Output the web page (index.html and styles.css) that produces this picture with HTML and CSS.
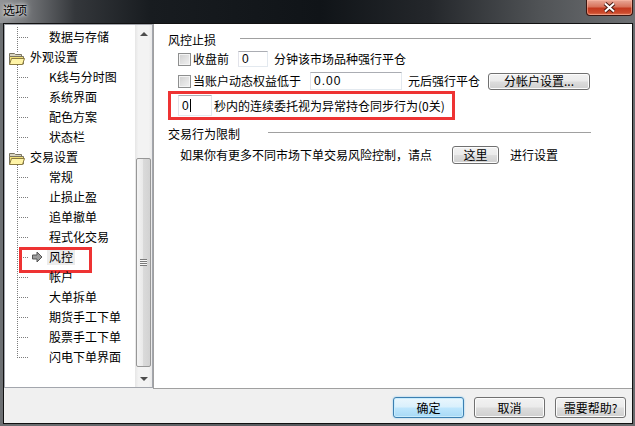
FILE: index.html
```html
<!DOCTYPE html>
<html lang="zh-CN">
<head>
    <meta charset="UTF-8">
    <title>选项</title>
    <link rel="stylesheet" href="styles.css">
</head>
<body>
<div class="window">

    <!-- TITLE BAR -->
    <div class="titlebar">
        <span class="title">选项</span>
        <button class="close-btn">
            <svg width="13" height="11" viewBox="0 0 13 11">
                <path d="M2 1.5 L11 9.5 M11 1.5 L2 9.5" stroke="#4a1a12" stroke-width="4"/>
                <path d="M2 1.5 L11 9.5 M11 1.5 L2 9.5" stroke="#fff" stroke-width="2"/>
            </svg>
        </button>
    </div>

    <div class="client">
        <div class="main">

            <!-- TREE -->
            <div class="tree">
                <ul class="tree-list">
                    <li class="node leaf"><span class="label">数据与存储</span></li>
                    <li class="node root">
                        <svg class="folder" width="16" height="13" viewBox="0 0 16 13">
                            <path d="M0.5 1.5 h5 l1 1 h6 v2 h-12z" fill="#d9d4c0" stroke="#7a7560"/>
                            <path d="M0.5 4.5 h14 v7.5 h-14z" fill="#f4e27a" stroke="#7a7560"/>
                            <path d="M2.5 6.5 h13 l-2 6 h-13z" fill="#fff4a6" stroke="#8a7a40"/>
                        </svg>
                        <span class="label">外观设置</span>
                    </li>
                    <li class="node leaf"><span class="label">K线与分时图</span></li>
                    <li class="node leaf"><span class="label">系统界面</span></li>
                    <li class="node leaf"><span class="label">配色方案</span></li>
                    <li class="node leaf"><span class="label">状态栏</span></li>
                    <li class="node root">
                        <svg class="folder" width="16" height="13" viewBox="0 0 16 13">
                            <path d="M0.5 1.5 h5 l1 1 h6 v2 h-12z" fill="#d9d4c0" stroke="#7a7560"/>
                            <path d="M0.5 4.5 h14 v7.5 h-14z" fill="#f4e27a" stroke="#7a7560"/>
                            <path d="M2.5 6.5 h13 l-2 6 h-13z" fill="#fff4a6" stroke="#8a7a40"/>
                        </svg>
                        <span class="label">交易设置</span>
                    </li>
                    <li class="node leaf"><span class="label">常规</span></li>
                    <li class="node leaf"><span class="label">止损止盈</span></li>
                    <li class="node leaf"><span class="label">追单撤单</span></li>
                    <li class="node leaf"><span class="label">程式化交易</span></li>
                    <li class="node leaf selected">
                        <svg class="arrow" width="12" height="12" viewBox="0 0 12 12">
                            <polygon points="1.5,4 6,4 6,1 11,6 6,11 6,8 1.5,8" fill="#9c9c9c" stroke="#555"/>
                        </svg>
                        <span class="label">风控</span>
                        <span class="mark"></span>
                    </li>
                    <li class="node leaf"><span class="label">帐户</span></li>
                    <li class="node leaf"><span class="label">大单拆单</span></li>
                    <li class="node leaf"><span class="label">期货手工下单</span></li>
                    <li class="node leaf"><span class="label">股票手工下单</span></li>
                    <li class="node leaf last"><span class="label">闪电下单界面</span></li>
                </ul>
                <div class="scrollbar">
                    <div class="sb-btn up"></div>
                    <div class="sb-track">
                        <div class="sb-thumb"><span class="grip"></span></div>
                    </div>
                    <div class="sb-btn down"></div>
                </div>
            </div>

            <!-- SETTINGS PANEL -->
            <div class="panel">
                <div class="group-title">
                    <span>风控止损</span>
                    <span class="rule"></span>
                </div>
                <div class="opt-row row-close">
                    <span class="check"></span>
                    <span class="txt">收盘前</span>
                    <span class="field field-min">0</span>
                    <span class="txt gap">分钟该市场品种强行平仓</span>
                </div>
                <div class="opt-row row-equity">
                    <span class="check"></span>
                    <span class="txt">当账户动态权益低于</span>
                    <span class="field field-money">0.00</span>
                    <span class="txt gap">元后强行平仓</span>
                    <button class="btn btn-account">分帐户设置...</button>
                </div>
                <div class="alert-box">
                    <span class="field field-sec">0<i class="caret"></i></span>
                    <span class="txt">秒内的连续委托视为异常持仓同步行为(0关)</span>
                </div>

                <div class="group-title group-second">
                    <span>交易行为限制</span>
                    <span class="rule"></span>
                </div>
                <div class="opt-row row-more">
                    <span class="txt">如果你有更多不同市场下单交易风险控制，请点</span>
                    <button class="btn btn-here">这里</button>
                    <span class="txt">进行设置</span>
                </div>
            </div>
        </div>

        <!-- FOOTER BUTTONS -->
        <div class="footer">
            <button class="btn btn-dialog btn-default">确定</button>
            <button class="btn btn-dialog">取消</button>
            <button class="btn btn-dialog">需要帮助?</button>
        </div>
    </div>
</div>
</body>
</html>
```

FILE: styles.css
```css
body {
    margin: 0;
    font-family: "Noto Sans CJK SC", "Liberation Sans", sans-serif;
    font-size: 12px;
    color: #000;
}

/* WINDOW */
.window {
    width: 635px;
    height: 426px;
    overflow: hidden;
    display: flex;
    flex-direction: column;
    background: linear-gradient(to right, #6c6f72, #55585c 50%, #696b6e);
}

/* TITLE BAR */
.titlebar {
    height: 23px;
    flex: none;
    display: flex;
    justify-content: space-between;
    align-items: flex-start;
    background: linear-gradient(to right, #929497 0, #7a7c7f 22px, #34373b 75px, #181c20 150px, #101418 320px, #24272b 430px, #505356 540px, #6e7073 635px);
}

.title {
    padding: 2px 0 0 3px;
    line-height: 16px;
    text-shadow: 0 0 6px #fff, 0 0 3px rgba(255,255,255,0.8);
}

.close-btn {
    width: 47px;
    height: 16px;
    margin-right: 2px;
    padding: 0;
    border: 1px solid #3b1610;
    border-top: none;
    border-radius: 0 0 4px 4px;
    background: linear-gradient(#e9a898 0%, #d8735c 45%, #c3391f 55%, #cc4a2c 85%, #e07a58 100%);
    box-shadow: inset 0 0 0 1px rgba(255,190,170,0.5);
    display: flex;
    align-items: center;
    justify-content: center;
}

/* CLIENT AREA */
.client {
    flex: none;
    height: 399px;
    margin: 0 2px 2px 3px;
    border: 1px solid #111;
    background: #f0f0f0;
    display: flex;
    flex-direction: column;
}

.main {
    height: 365px;
    display: flex;
    align-items: flex-start;
}

/* TREE */
.tree {
    width: 147px;
    height: 362px;
    border: 1px solid #a3a6ad;
    background: #fff;
    display: flex;
}

.tree-list {
    flex: 1;
    list-style: none;
    margin: 0;
    padding: 2px 0 0 0;
}

.node {
    position: relative;
    height: 20px;
    display: flex;
    align-items: center;
    white-space: nowrap;
    line-height: 14px;
}

.leaf {
    padding-left: 44px;
    background:
        repeating-linear-gradient(to right, #7c7c7c 0 1px, transparent 1px 2px) 12px 10px / 12px 1px no-repeat,
        repeating-linear-gradient(to bottom, #7c7c7c 0 1px, transparent 1px 2px) 12px 0 / 1px 100% no-repeat;
}

.leaf.last {
    background:
        repeating-linear-gradient(to right, #7c7c7c 0 1px, transparent 1px 2px) 12px 10px / 12px 1px no-repeat,
        repeating-linear-gradient(to bottom, #7c7c7c 0 1px, transparent 1px 2px) 12px 0 / 1px 11px no-repeat;
}

.root {
    padding-left: 4px;
    background: repeating-linear-gradient(to bottom, #7c7c7c 0 1px, transparent 1px 2px) 12px 0 / 1px 100% no-repeat;
}

.root .folder {
    margin-top: 2px;
    background: #fff;
}

.root .label {
    margin-left: 5px;
}

.selected {
    padding-left: 26px;
}

.selected .arrow {
    flex: none;
}

.selected .label {
    margin-left: 4px;
    padding: 1px 2px;
    background: #ececec;
}

.mark {
    position: absolute;
    left: 14px;
    top: 0;
    width: 73px;
    height: 26px;
    box-sizing: border-box;
    border: 3px solid #ee3333;
}

/* SCROLLBAR */
.scrollbar {
    width: 17px;
    display: flex;
    flex-direction: column;
    background: linear-gradient(to right, #e6e6e6, #f3f3f3 20%, #f3f3f3 80%, #e9e9e9);
}

.sb-btn {
    height: 17px;
    display: flex;
    align-items: center;
    justify-content: center;
}

.sb-btn::before {
    content: "";
    border-left: 4px solid transparent;
    border-right: 4px solid transparent;
}

.sb-btn.up::before {
    border-bottom: 4px solid #4d4d4d;
}

.sb-btn.down::before {
    border-top: 4px solid #4d4d4d;
}

.sb-track {
    flex: 1;
    padding-top: 116px;
}

.sb-thumb {
    height: 207px;
    margin: 0 1px;
    border: 1px solid #979797;
    border-radius: 2px;
    background: linear-gradient(to right, #f4f4f4, #e9e9e9 45%, #dadada 50%, #d2d2d2);
    display: flex;
    align-items: center;
    justify-content: center;
}

.grip {
    width: 7px;
    height: 7px;
    background: repeating-linear-gradient(to bottom, #7a7a7a 0 1px, #f8f8f8 1px 2px);
}

/* PANEL */
.panel {
    flex: 1;
    height: 365px;
    box-sizing: border-box;
    border-left: 1px solid #a0a0a0;
    border-bottom: 1px solid #a0a0a0;
    background: #fff;
    padding: 8px 0 0 14px;
    display: flex;
    flex-direction: column;
    align-items: flex-start;
    line-height: 14px;
}

.group-title {
    height: 16px;
    width: 100%;
    display: flex;
    align-items: center;
    white-space: nowrap;
}

.rule {
    flex: 1;
    height: 1px;
    margin: 0 41px 4px 24px;
    background: #a0a0a0;
}

.group-second {
    margin-top: 6px;
}

.group-second .rule {
    margin-left: 28px;
}

.opt-row {
    display: flex;
    align-items: center;
    white-space: nowrap;
}

.row-close {
    height: 18px;
    margin-top: 2px;
    padding-left: 10px;
}

.row-equity {
    height: 18px;
    margin-top: 4px;
    padding-left: 10px;
}

.row-more {
    height: 19px;
    margin-top: 3px;
    padding-left: 12px;
}

.check {
    width: 11px;
    height: 11px;
    margin-right: 2px;
    border: 1px solid #8e8f8f;
    background: linear-gradient(135deg, #cfcfcf, #f2f2f2);
    box-shadow: inset 0 0 0 1px #f4f4f4;
}

.gap {
    margin-left: 6px;
}

/* TEXT FIELDS */
.field {
    box-sizing: border-box;
    border: 1px solid #abadb3;
    border-color: #abadb3 #e3e9ef #e3e9ef #e2e3ea;
    background: #fff;
    font-family: "Liberation Sans", sans-serif;
    font-size: 12px;
    padding-left: 3px;
    display: flex;
    align-items: center;
}

.field-min {
    width: 30px;
    height: 16px;
    margin-left: 9px;
}

.field-money {
    width: 92px;
    height: 18px;
    margin-left: 9px;
    letter-spacing: 1px;
}

.field-sec {
    width: 34px;
    height: 21px;
    margin-right: 2px;
}

.caret {
    width: 1px;
    height: 13px;
    margin-left: 1px;
    background: #000;
}

.alert-box {
    width: 287px;
    height: 29px;
    margin-top: 1px;
    box-sizing: border-box;
    border: 3px solid #ee3333;
    padding-left: 7px;
    display: flex;
    align-items: center;
    white-space: nowrap;
}

/* BUTTONS */
.btn {
    box-sizing: border-box;
    padding: 0;
    border: 1px solid #707070;
    border-radius: 3px;
    background: linear-gradient(#f2f2f2 0%, #ebebeb 48%, #dddddd 52%, #cfcfcf 100%);
    box-shadow: inset 0 0 0 1px #fcfcfc;
    font-family: "Noto Sans CJK SC", "Liberation Sans", sans-serif;
    font-size: 12px;
    line-height: 14px;
    color: #000;
}

.btn-account {
    width: 102px;
    height: 17px;
    margin-left: 8px;
}

.btn-here {
    width: 47px;
    height: 18px;
    margin: 0 11px 0 20px;
}

/* FOOTER */
.footer {
    flex: 1;
    display: flex;
    justify-content: flex-end;
    align-items: flex-start;
    gap: 10px;
    padding: 8px 6px 0 0;
}

.btn-dialog {
    width: 71px;
    height: 21px;
}

.btn-default {
    border-color: #3c7fb1;
    background: linear-gradient(#eaf6fd 0%, #d9f0fc 48%, #bee6fd 52%, #a7d9f5 100%);
    box-shadow: inset 0 0 0 1px #c8ecfd, 0 0 2px #7fc7f0;
}
```
